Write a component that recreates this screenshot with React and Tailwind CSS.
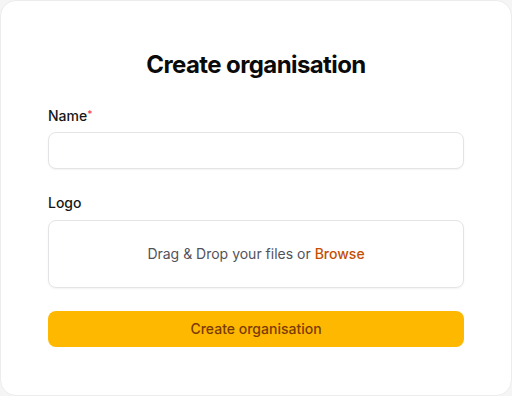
import React from "react";

export default function App() {
  return (
    <div className="w-[512px] h-[396px] bg-[#f5f5f5] font-['Inter',sans-serif]">
      <div className="h-[396px] bg-white border border-[#ececec] rounded-2xl px-[47px] pt-12 flex flex-col">
        <h1 className="text-center text-2xl leading-8 font-bold text-[#0a0a0a] tracking-[-0.025em]">
          Create organisation
        </h1>

        <div className="mt-[25px] flex flex-col">
          <label className="text-sm leading-5 font-medium text-[#171717]">
            Name<span className="text-[#ef4444] text-[10px] align-top relative -top-[2px]">*</span>
          </label>
          <input
            type="text"
            className="mt-1.5 h-[37px] w-full rounded-lg border border-[#e4e4e7] bg-white shadow-[0_1px_2px_rgba(0,0,0,0.05)] px-3 text-sm outline-none"
          />
        </div>

        <div className="mt-6 flex flex-col">
          <label className="text-sm leading-5 font-medium text-[#171717]">Logo</label>
          <div className="mt-[7px] h-[68px] w-full rounded-lg border border-[#e4e4e7] shadow-[0_1px_2px_rgba(0,0,0,0.05)] flex items-center justify-center text-sm text-[#52525b]">
            Drag &amp; Drop your files or&nbsp;<span className="text-[#c54f00] font-medium">Browse</span>
          </div>
        </div>

        <button className="mt-[23px] h-9 w-full rounded-lg bg-[#ffb800] text-sm font-medium text-[#7a3b00]">
          Create organisation
        </button>
      </div>
    </div>
  );
}
